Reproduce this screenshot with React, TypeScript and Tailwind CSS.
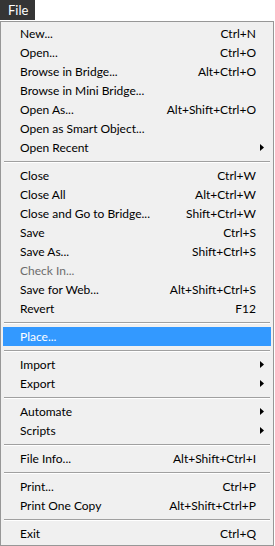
import React from 'react';

type Item =
  | { kind: 'item'; label: string; shortcut?: string; sub?: boolean; disabled?: boolean; active?: boolean }
  | { kind: 'sep' };

const items: Item[] = [
  { kind: 'item', label: 'New...', shortcut: 'Ctrl+N' },
  { kind: 'item', label: 'Open...', shortcut: 'Ctrl+O' },
  { kind: 'item', label: 'Browse in Bridge...', shortcut: 'Alt+Ctrl+O' },
  { kind: 'item', label: 'Browse in Mini Bridge...' },
  { kind: 'item', label: 'Open As...', shortcut: 'Alt+Shift+Ctrl+O' },
  { kind: 'item', label: 'Open as Smart Object...' },
  { kind: 'item', label: 'Open Recent', sub: true },
  { kind: 'sep' },
  { kind: 'item', label: 'Close', shortcut: 'Ctrl+W' },
  { kind: 'item', label: 'Close All', shortcut: 'Alt+Ctrl+W' },
  { kind: 'item', label: 'Close and Go to Bridge...', shortcut: 'Shift+Ctrl+W' },
  { kind: 'item', label: 'Save', shortcut: 'Ctrl+S' },
  { kind: 'item', label: 'Save As...', shortcut: 'Shift+Ctrl+S' },
  { kind: 'item', label: 'Check In...', disabled: true },
  { kind: 'item', label: 'Save for Web...', shortcut: 'Alt+Shift+Ctrl+S' },
  { kind: 'item', label: 'Revert', shortcut: 'F12' },
  { kind: 'sep' },
  { kind: 'item', label: 'Place...', active: true },
  { kind: 'sep' },
  { kind: 'item', label: 'Import', sub: true },
  { kind: 'item', label: 'Export', sub: true },
  { kind: 'sep' },
  { kind: 'item', label: 'Automate', sub: true },
  { kind: 'item', label: 'Scripts', sub: true },
  { kind: 'sep' },
  { kind: 'item', label: 'File Info...', shortcut: 'Alt+Shift+Ctrl+I' },
  { kind: 'sep' },
  { kind: 'item', label: 'Print...', shortcut: 'Ctrl+P' },
  { kind: 'item', label: 'Print One Copy', shortcut: 'Alt+Shift+Ctrl+P' },
  { kind: 'sep' },
  { kind: 'item', label: 'Exit', shortcut: 'Ctrl+Q' },
];

const Arrow = () => (
  <svg width="4" height="7" viewBox="0 0 4 7" className="block">
    <path d="M0 0 L4 3.5 L0 7 Z" fill="#000" />
  </svg>
);

function Row({ label, shortcut, sub, disabled, active }: Extract<Item, { kind: 'item' }>) {
  const color = active ? 'text-white' : disabled ? 'text-[#6d6d6d]' : 'text-black';
  return (
    <div className={active ? 'bg-[#3399ff]' : ''}>
      <div className={`h-[19px] pl-[17px] pr-[15px] flex items-center text-[12px] ${color}`}>
        <div className="flex-1 whitespace-nowrap">{label}</div>
        {shortcut && <div className="whitespace-nowrap">{shortcut}</div>}
        {sub && (
          <div className="mr-[-8px]">
            <Arrow />
          </div>
        )}
      </div>
    </div>
  );
}

export default function App() {
  return (
    <div className="w-[275px] h-[546px] bg-white overflow-hidden" style={{ fontFamily: 'Lato, "Open Sans", sans-serif' }}>
      {/* menu bar */}
      <div className="h-[21px] flex">
        <div className="w-[35px] h-[20px] bg-[#353535] text-white text-[13px] leading-[20px] pl-[8px]">File</div>
      </div>

      {/* dropdown */}
      <div className="w-[274px] h-[525px] bg-[#f0f0f0] border border-[#979797] pt-[2px] px-[2px]">
        {items.map((it, i) =>
          it.kind === 'sep' ? (
            <div key={i} className="h-[9px] flex flex-col justify-center">
              <div className="h-px bg-[#a0a0a0] mx-px" />
              <div className="h-px bg-white mx-px" />
            </div>
          ) : (
            <Row key={i} {...it} />
          )
        )}
      </div>
    </div>
  );
}
